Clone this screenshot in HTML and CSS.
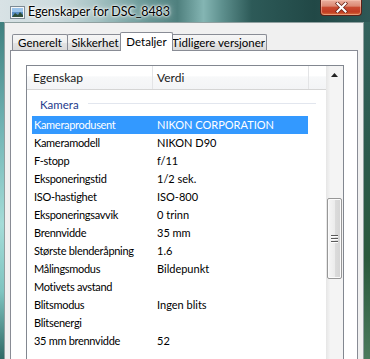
FILE: index.html
```html
<!DOCTYPE html>
<html>
<head>
<meta charset="utf-8">
<link rel="stylesheet" href="styles.css">
</head>
<body>
<div class="titlebar">
  <svg class="appicon" width="15" height="13" viewBox="0 0 15 13">
    <rect x="0.5" y="0.5" width="14" height="12" fill="#f4f6f8" stroke="#7d8a94"/>
    <rect x="2" y="2" width="11" height="9" fill="#5b8fc4"/>
    <rect x="2" y="2" width="11" height="4" fill="#9cc4ea"/>
    <path d="M2 11 L5 7 L8 9 L10 6 L13 9 L13 11 Z" fill="#2f4f3a"/>
  </svg>
  <span class="title">Egenskaper for DSC_8483</span>
  <div class="close">
    <svg width="13" height="11" viewBox="0 0 13 11">
      <path d="M2.5 1.5 L10.5 9.5 M10.5 1.5 L2.5 9.5" stroke="#6a2418" stroke-width="3.6" stroke-linecap="square"/>
      <path d="M2.5 1.5 L10.5 9.5 M10.5 1.5 L2.5 9.5" stroke="#ffffff" stroke-width="2.1" stroke-linecap="square"/>
    </svg>
  </div>
</div>
<div class="client">
  <div class="tabs">
    <div class="tab tab-gen">Generelt</div>
    <div class="tab tab-sik">Sikkerhet</div>
    <div class="tab tab-det active">Detaljer</div>
    <div class="tab tab-tid">Tidligere versjoner</div>
  </div>
  <div class="panel">
    <div class="list">
      <div class="listmain">
        <div class="header">
          <div class="hcell hcell1">Egenskap</div>
          <div class="hcell hcell2">Verdi</div>
          <div class="hfill"></div>
        </div>
        <div class="group"><span class="gtext">Kamera</span><span class="gline"></span></div>
        <div class="row selected"><span class="c1">Kameraprodusent</span><span class="c2">NIKON CORPORATION</span></div>
        <div class="row"><span class="c1">Kameramodell</span><span class="c2">NIKON D90</span></div>
        <div class="row"><span class="c1">F-stopp</span><span class="c2">f/11</span></div>
        <div class="row"><span class="c1">Eksponeringstid</span><span class="c2">1/2 sek.</span></div>
        <div class="row"><span class="c1">ISO-hastighet</span><span class="c2">ISO-800</span></div>
        <div class="row"><span class="c1">Eksponeringsavvik</span><span class="c2">0 trinn</span></div>
        <div class="row"><span class="c1">Brennvidde</span><span class="c2">35 mm</span></div>
        <div class="row"><span class="c1">Største blenderåpning</span><span class="c2">1.6</span></div>
        <div class="row"><span class="c1">Målingsmodus</span><span class="c2">Bildepunkt</span></div>
        <div class="row"><span class="c1">Motivets avstand</span><span class="c2"></span></div>
        <div class="row"><span class="c1">Blitsmodus</span><span class="c2">Ingen blits</span></div>
        <div class="row"><span class="c1">Blitsenergi</span><span class="c2"></span></div>
        <div class="row"><span class="c1">35 mm brennvidde</span><span class="c2">52</span></div>
      </div>
      <div class="scrollbar">
        <div class="sb-up">
          <svg width="7" height="4" viewBox="0 0 7 4"><path d="M0 4 L3.5 0 L7 4 Z" fill="#222"/></svg>
        </div>
        <div class="sb-track"></div>
        <div class="thumb">
          <div class="grip"><i></i><i></i><i></i></div>
        </div>
      </div>
    </div>
  </div>
</div>
</body>
</html>
```

FILE: styles.css
```css
html, body {
  margin: 0;
  padding: 0;
}
body {
  width: 370px;
  height: 359px;
  overflow: hidden;
  font-family: "Segoe UI", Lato, "Noto Sans", sans-serif;
  font-size: 11.5px;
  color: #000;
  background:
    linear-gradient(to bottom, #3f7f7e 0%, #6fb2b2 30%, #a4dcd8 60%, #7fc4c0 80%, #2f6a66 100%) 0 22px / 4px 337px no-repeat,
    linear-gradient(to bottom, #33625d 0%, #2b5a4c 40%, #2a5a3c 70%, #4a7a5c 100%) right 22px / 6px 337px no-repeat,
    linear-gradient(to right, #d8e2e5 0%, #cddbde 15%, #a7c3c4 26%, #6e9c9b 38%, #4f807e 48%, #84b5b3 55%, #5e908e 60%, #2d5a58 68%, #214846 85%, #2e5856 100%);
}

.titlebar {
  height: 22px;
  display: flex;
  align-items: flex-start;
}
.appicon {
  margin: 6px 0 0 10px;
  flex: none;
}
.title {
  margin: 3px 0 0 3px;
  font-size: 12.5px;
  letter-spacing: -0.1px;
  line-height: 18px;
  color: #000;
  text-shadow: 0 0 6px #fff, 0 0 3px #fff, 0 0 2px #fff;
  white-space: nowrap;
}
.close {
  margin-left: auto;
  margin-right: 8px;
  width: 40px;
  height: 15px;
  border: 1px solid #5c2118;
  border-top: none;
  border-radius: 0 0 4px 4px;
  background: linear-gradient(to bottom, #eab0a0 0%, #dc8a74 40%, #c94a30 50%, #c23b22 80%, #d9743f 100%);
  box-shadow: inset 0 0 0 1px rgba(255, 210, 190, 0.45);
  display: flex;
  align-items: center;
  justify-content: center;
  flex: none;
}

.client {
  margin: 0 6px 0 4px;
  height: 337px;
  background: #f0f0f0;
  border: 1px solid #90a0a0;
  border-bottom: none;
  box-sizing: border-box;
}

.tabs {
  display: flex;
  align-items: flex-end;
  padding: 9px 0 0 7px;
  margin-bottom: -1px;
  position: relative;
  z-index: 1;
}
.tab {
  box-sizing: border-box;
  height: 16px;
  margin-bottom: 1px;
  margin-right: -1px;
  border: 1px solid #898c95;
  border-bottom: none;
  border-radius: 2px 2px 0 0;
  background: linear-gradient(to bottom, #f6f6f6 0%, #efefef 50%, #e4e4e4 51%, #dadada 100%);
  text-align: center;
  line-height: 15px;
  color: #000;
  white-space: nowrap;
}
.tab-gen { width: 56px; }
.tab-sik { width: 56px; }
.tab-det { width: 53px; }
.tab-tid { width: 97px; }
.tab.active {
  height: 19px;
  margin-bottom: 0;
  margin-left: -2px;
  margin-right: -3px;
  background: #fff;
  position: relative;
  z-index: 2;
  line-height: 17px;
}

.panel {
  margin: 0 5px;
  height: 320px;
  box-sizing: border-box;
  background: #fff;
  border: 1px solid #898c95;
  padding: 14px 13px 0 15px;
}

.list {
  display: flex;
  height: 310px;
  box-sizing: border-box;
  border: 1px solid #828790;
  border-bottom: none;
}
.listmain {
  flex: 1;
  min-width: 0;
}
.header {
  display: flex;
  height: 24px;
  box-sizing: border-box;
  border-bottom: 1px solid #d5d5d5;
  background: linear-gradient(to bottom, #ffffff 0%, #ffffff 45%, #f7f8f9 46%, #f3f4f6 100%);
}
.hcell {
  box-sizing: border-box;
  height: 23px;
  line-height: 23px;
  border-right: 1px solid #e3e4e6;
  color: #1a1a1a;
  font-size: 12px;
}
.hcell1 { width: 126px; padding-left: 6px; }
.hcell2 { width: 156px; padding-left: 4px; }
.hfill { flex: 1; }

.group {
  height: 26px;
  box-sizing: border-box;
  padding: 3px 10px 0 13px;
  display: flex;
  align-items: center;
}
.gtext {
  color: #1e3a8c;
  font-size: 11.5px;
}
.gline {
  flex: 1;
  height: 1px;
  margin-left: 9px;
  margin-top: -2px;
  background: #e2e6ee;
}

.row {
  display: flex;
  height: 18px;
  line-height: 18px;
  margin-left: 5px;
  width: 276px;
  white-space: nowrap;
  font-size: 11px;
}
.row.selected {
  background: #3399ff;
  color: #fff;
}
.c1 {
  width: 120px;
  padding-left: 2px;
  box-sizing: border-box;
  overflow: hidden;
  letter-spacing: -0.3px;
}
.c2 {
  padding-left: 5px;
}

.scrollbar {
  width: 17px;
  flex: none;
  display: flex;
  flex-direction: column;
  background: linear-gradient(to right, #e6e6e6 0%, #f4f4f4 25%, #f4f4f4 100%);
}
.sb-up {
  height: 17px;
  display: flex;
  align-items: center;
  justify-content: center;
  flex: none;
}
.sb-track {
  height: 115px;
  flex: none;
}
.thumb {
  height: 81px;
  margin: 0 1px 0 1px;
  box-sizing: border-box;
  border: 1px solid #979797;
  border-radius: 2px;
  background: linear-gradient(to right, #f6f6f6 0%, #ececec 50%, #dcdcdc 51%, #d4d4d4 100%);
  box-shadow: inset 0 0 0 1px #fbfbfb;
  display: flex;
  align-items: center;
  justify-content: center;
  flex: none;
}
.grip {
  display: flex;
  flex-direction: column;
  gap: 1px;
}
.grip i {
  display: block;
  width: 7px;
  height: 1px;
  background: #5a5a5a;
  border-bottom: 1px solid #fdfdfd;
}
```
